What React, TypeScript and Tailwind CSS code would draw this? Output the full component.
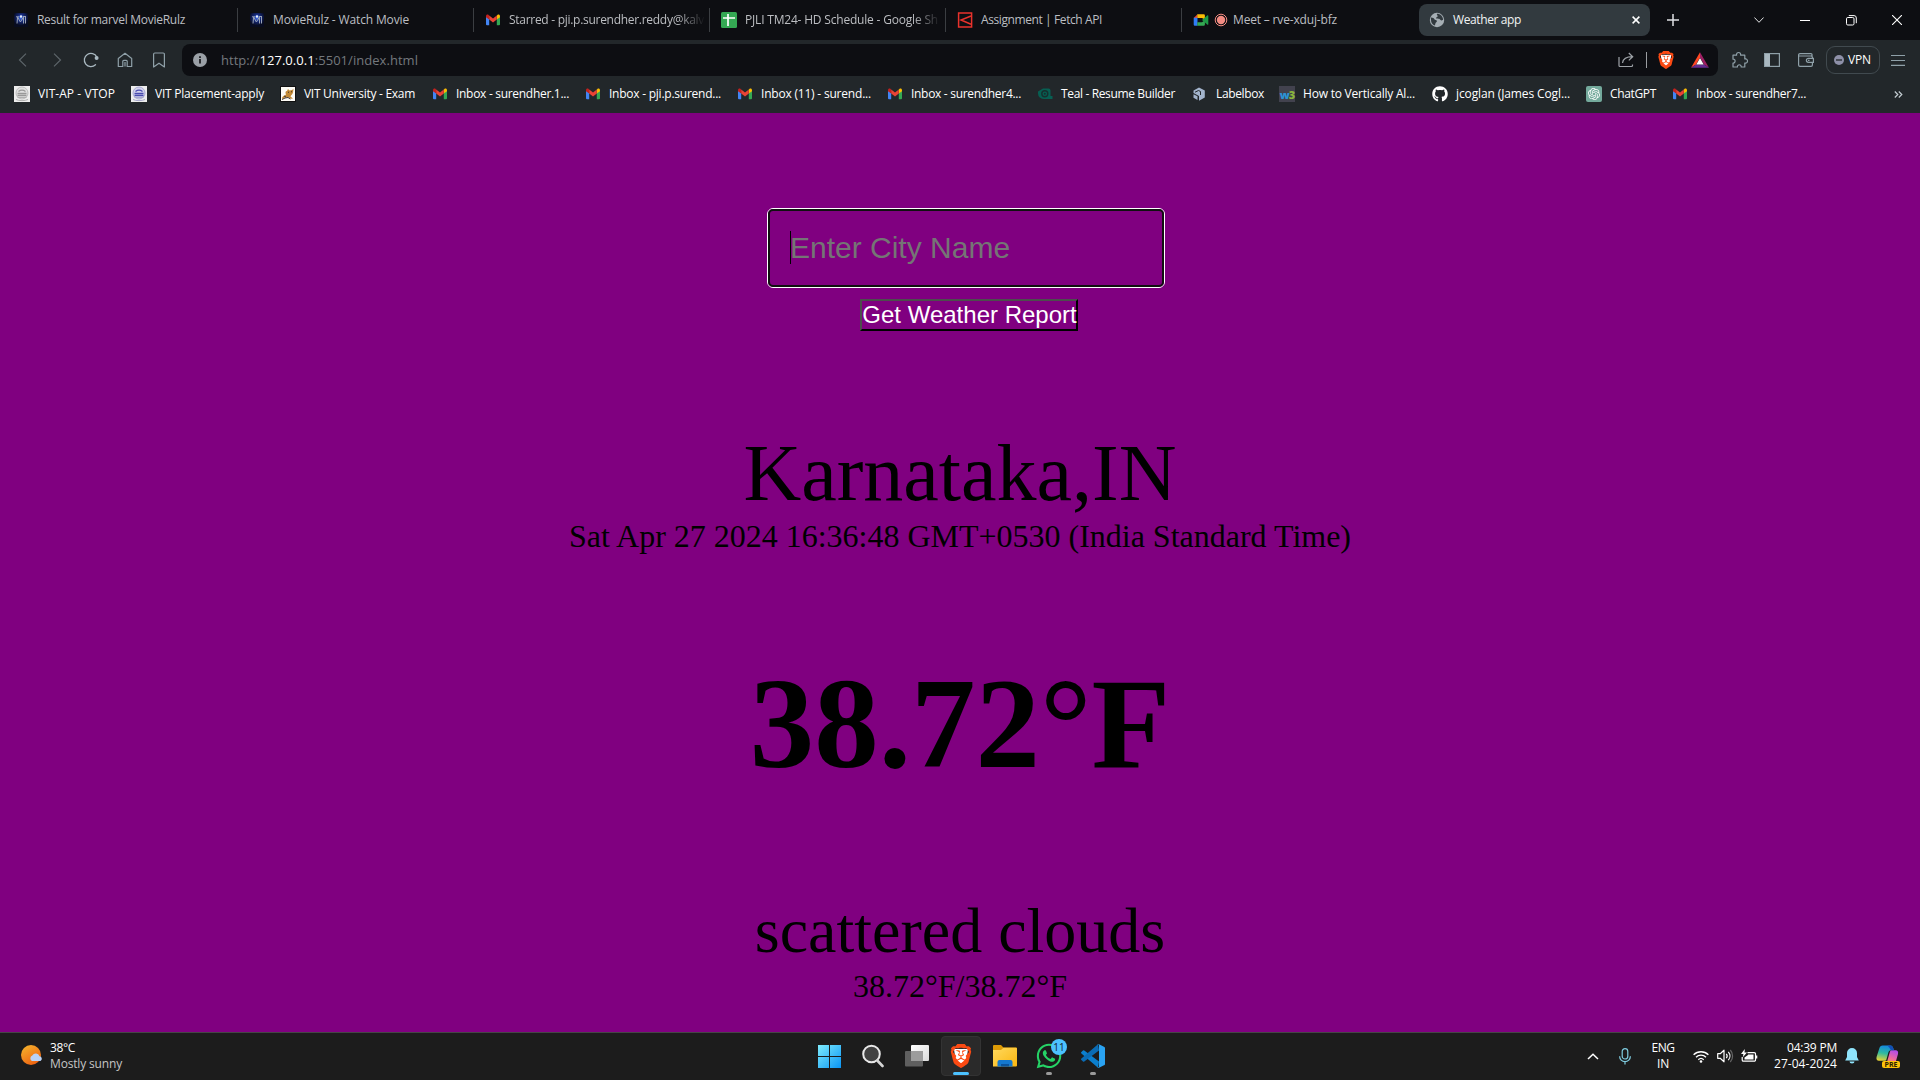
import React, { useLayoutEffect, useRef } from 'react';
import { FaGithub, FaWhatsapp } from 'react-icons/fa';
import { SiBrave, SiOpenai } from 'react-icons/si';

/* Single-line label whose tracking is adjusted so the text spans `w` pixels. */
function Fit({ w, className = '', children }: { w: number; className?: string; children: React.ReactNode }) {
  const ref = useRef<HTMLSpanElement>(null);
  useLayoutEffect(() => {
    const el = ref.current;
    if (!el) return;
    const fit = () => {
      el.style.letterSpacing = '0px';
      const n = (el.textContent || '').length || 1;
      el.style.letterSpacing = `${(w - el.getBoundingClientRect().width) / n}px`;
    };
    fit();
    document.fonts?.ready.then(fit);
  }, [w]);
  return (
    <span ref={ref} className={`inline-block shrink-0 whitespace-pre ${className}`}>
      {children}
    </span>
  );
}

const Gmail = () => (
  <svg width="16" height="16" viewBox="0 0 16 16" className="shrink-0">
    <path d="M1 4.5V12.2a1 1 0 0 0 1 1h2.2V7z" fill="#4285f4" />
    <path d="M15 4.5V12.2a1 1 0 0 1-1 1h-2.2V7z" fill="#34a853" />
    <path d="M11.8 3.7V7.6L15 5.2V4.2c0-1.5-1.6-2-2.6-1.2z" fill="#fbbc04" />
    <path d="M4.2 3.7V7.6L1 5.2V4.2c0-1.5 1.6-2 2.6-1.2z" fill="#c5221f" />
    <path d="M4.2 3.6 8 6.5l3.8-2.9v4L8 10.5 4.2 7.6z" fill="#ea4335" />
  </svg>
);

const MovieIcon = () => (
  <svg width="16" height="16" viewBox="0 0 16 16" className="shrink-0">
    <defs>
      <radialGradient id="mv" cx=".5" cy=".35" r=".55">
        <stop offset="0" stopColor="#3f6ff0" />
        <stop offset=".5" stopColor="#132672" />
        <stop offset="1" stopColor="#080c20" />
      </radialGradient>
    </defs>
    <rect x="1" y="1" width="14" height="14" fill="url(#mv)" />
    <path d="M4 11.5 4.6 5l2.8 5L10.5 5v6.5M12.5 5v6.5M3 4.8h3M10 4.5h3" stroke="#98a2b6" strokeWidth="1" fill="none" />
    <circle cx="8" cy="4.5" r="1.2" fill="#e6efff" />
  </svg>
);

const SheetsIcon = () => (
  <svg width="16" height="16" viewBox="0 0 16 16" className="shrink-0">
    <rect width="16" height="16" rx="1.5" fill="#34a853" />
    <path d="M2 6h12M7 2v12" stroke="#fff" strokeWidth="1.7" />
  </svg>
);

const KalviIcon = () => (
  <svg width="16" height="16" viewBox="0 0 16 16" className="shrink-0">
    <rect x="1.6" y="1" width="13" height="14" fill="none" stroke="#e8322c" strokeWidth="1.5" />
    <path d="M14 4 4 8l10 4.2" fill="none" stroke="#e8322c" strokeWidth="1.5" />
  </svg>
);

const MeetIcon = () => (
  <svg width="16" height="16" viewBox="0 0 16 16" className="shrink-0">
    <path d="M.7 6 4.5 2.2V6z" fill="#ea4335" />
    <path d="M4.3 2.2h6.4a1.2 1.2 0 0 1 1.2 1.2V7.5L9 6H4.3z" fill="#fbbc04" />
    <path d="M.7 5.8h3.8v8H1.9a1.2 1.2 0 0 1-1.2-1.2z" fill="#2f7df6" />
    <path d="M4.3 10.2H9l2.9-2v4.4a1.2 1.2 0 0 1-1.2 1.2H4.3z" fill="#34a853" />
    <path d="m9 8 5.2-4.5c.5-.4 1.1-.2 1.1.5v8.2c0 .6-.6.8-1.1.4z" fill="#1e9a46" />
  </svg>
);

const Globe = () => (
  <svg width="16" height="16" viewBox="0 0 16 16" className="shrink-0">
    <circle cx="8" cy="8" r="7.2" fill="#a5aeb4" />
    <path d="M2 5.5c2 .2 3 .6 3.4 1.7.3.9 2.3.5 2.5 1.7.1 1-1.3 1.2-1.5 2.5l-.5 2.2C3.600 13 2 10.600 2 8zM8 1.800c-.8 1.400 1.200 1.500.6 2.600-.5.8-1.600.5-1.500 1.500.2 1 2 .4 3.100.8 1 .5 1.200 1.800 2.500 1.800l1.400-.8C14 4.500 11.500 1.800 8 1.800z" fill="#323a3f" />
  </svg>
);

const Seal = ({ blue = false }: { blue?: boolean }) => (
  <svg width="16" height="16" viewBox="0 0 16 16" className="shrink-0">
    <rect width="16" height="16" fill="#ededed" />
    <circle cx="8" cy="7" r="6" fill={blue ? '#d4d4ee' : '#e0e0e0'} stroke={blue ? '#a9aad6' : '#bdbdbd'} />
    <path d="M3.500 7.500h9M4.500 5.500c2-1.500 5-1.500 7 0M3.500 9.500h9" stroke={blue ? '#4a4cb0' : '#999'} strokeWidth="1.300" fill="none" />
    <path d="M2 13.500c3 1.500 9 1.500 12 0M3.500 11.500h9" stroke={blue ? '#a7a8cc' : '#b0b0b0'} fill="none" />
  </svg>
);

const TigerIcon = () => (
  <svg width="16" height="16" viewBox="0 0 16 16" className="shrink-0">
    <rect x=".5" y=".5" width="15" height="15" fill="#fdfbf5" stroke="#111" />
    <path d="M2 13c0-3 2-3 4-4.500C5 6.500 5.500 5 7 5l1-2 1.500 1.500L12 4l1.500-1-.5 3.500c-.5 2-2 2.500-2.500 4l2.500 2-2 .3L8 11l-3 .5z" fill="#c48a35" />
    <path d="M2 13.500 5 12l3-.5 2.500 1.500M8 6l1 .5M11 6l1-.5M4 10l2 1" stroke="#43352a" fill="none" />
  </svg>
);

const TealIcon = () => (
  <svg width="16" height="16" viewBox="0 0 16 16" className="shrink-0">
    <path d="M1 5.500 6 2.500h5.500a2 2 0 0 1 2 2v5.500h2v3H7a5.500 5.500 0 0 1-6-5.500z" fill="#075f52" />
    <circle cx="7.800" cy="7.800" r="3" fill="none" stroke="#16302f" strokeWidth="1.400" />
    <circle cx="7.800" cy="7.800" r="1" fill="#16302f" />
  </svg>
);

const LabelboxIcon = () => (
  <svg width="16" height="16" viewBox="0 0 16 16" className="shrink-0">
    <path d="M7 1.500 12.800 4.500v7L7 14.700V10L1.500 7V4.400z" fill="#a3b4cc" />
    <path d="M1.500 8.200 5.500 10.300V14L1.500 11.700z" fill="#a3b4cc" />
    <path d="M3 6.200 6.500 4.500 8.500 5.500V9" stroke="#22272a" strokeWidth="1" fill="none" />
  </svg>
);

const W3Icon = () => (
  <span className="flex h-4 w-4 shrink-0 items-center justify-center bg-[#42424e] text-[11px] leading-none font-extrabold tracking-[-1px]">
    <span className="text-[#2a93d5]">w</span>
    <span className="text-[#8bb63c]">3</span>
  </span>
);

const GptIcon = () => (
  <span className="flex h-4 w-4 shrink-0 items-center justify-center rounded-[2px] bg-[#74aa9c] text-white">
    <SiOpenai size={12} />
  </span>
);

const BraveIcon = ({ size }: { size: number }) => (
  <svg width={size} height={size} viewBox="0 0 24 24" className="shrink-0 overflow-visible">
    <path d="M5 5h14l-1.500 11L12 21l-5.500-5z" fill="#fff" />
    <SiBrave size={24} color="#fb4a13" />
  </svg>
);

const BatIcon = () => (
  <svg width="18" height="16" viewBox="0 0 18 16" className="shrink-0">
    <path d="M9 .3 0 15.700 5 12.500 9 5.500z" fill="#ff4724" />
    <path d="M9 .3V5.500l4 7 5 3.200z" fill="#9e1f63" />
    <path d="M0 15.700h18l-5-3.200H5z" fill="#662d91" />
    <path d="m9 6 3.700 6.500H5.300z" fill="#fff" />
  </svg>
);

function Tab({ icon, children, w, fade = false }: { icon: React.ReactNode; children: string; w: number; fade?: boolean }) {
  return (
    <div className="flex h-10 w-[236px] shrink-0 items-center pl-[11px]">
      {icon}
      <div
        className={
          fade
            ? 'ml-2 w-[196px] [mask-image:linear-gradient(to_right,black_168px,transparent_196px)]'
            : 'ml-2 flex-1'
        }
      >
        <Fit w={w} className="text-[#bcbec2]">{children}</Fit>
      </div>
      <div className="ml-auto h-6 w-px bg-[#3b3e42]" />
    </div>
  );
}

const bookmarks: { icon: React.ReactNode; label: string; slot: string; w: number }[] = [
  { icon: <Seal />, label: 'VIT-AP - VTOP', slot: 'w-[117px]', w: 77 },
  { icon: <Seal blue />, label: 'VIT Placement-apply', slot: 'w-[149px]', w: 109 },
  { icon: <TigerIcon />, label: 'VIT University - Exam', slot: 'w-[152px]', w: 111 },
  { icon: <Gmail />, label: 'Inbox - surendher.1...', slot: 'w-[153px]', w: 113 },
  { icon: <Gmail />, label: 'Inbox - pji.p.surend...', slot: 'w-[152px]', w: 112 },
  { icon: <Gmail />, label: 'Inbox (11) - surend...', slot: 'w-[150px]', w: 110 },
  { icon: <Gmail />, label: 'Inbox - surendher4...', slot: 'w-[150px]', w: 110 },
  { icon: <TealIcon />, label: 'Teal - Resume Builder', slot: 'w-[155px]', w: 114 },
  { icon: <LabelboxIcon />, label: 'Labelbox', slot: 'w-[87px]', w: 48 },
  { icon: <W3Icon />, label: 'How to Vertically Al...', slot: 'w-[153px]', w: 112 },
  { icon: <FaGithub size={16} color="#fff" className="shrink-0" />, label: 'jcoglan (James Cogl...', slot: 'w-[154px]', w: 114 },
  { icon: <GptIcon />, label: 'ChatGPT', slot: 'w-[86px]', w: 46 },
  { icon: <Gmail />, label: 'Inbox - surendher7...', slot: 'w-[150px]', w: 110 },
];

function TabStrip() {
  return (
    <div className="flex h-10 items-center bg-[#0d0e12] pl-[2px]">
      <Tab icon={<MovieIcon />} w={148}>Result for marvel MovieRulz</Tab>
      <Tab icon={<MovieIcon />} w={136}>MovieRulz - Watch Movie</Tab>
      <Tab icon={<Gmail />} w={195} fade>Starred - pji.p.surendher.reddy@kalv</Tab>
      <Tab icon={<SheetsIcon />} w={193} fade>PJLI TM24- HD Schedule - Google Sh</Tab>
      <Tab icon={<KalviIcon />} w={121}>Assignment | Fetch API</Tab>
      <div className="flex h-10 w-[237px] shrink-0 items-center pl-[11px]">
        <MeetIcon />
        <svg width="14" height="14" viewBox="0 0 14 14" className="ml-[5px] shrink-0">
          <circle cx="7" cy="7" r="5.800" fill="none" stroke="#f28b82" strokeWidth="1" />
          <circle cx="7" cy="7" r="4.200" fill="#f28b82" />
        </svg>
        <Fit w={104} className="ml-[5px] text-[#bcbec2]">Meet – rve-xduj-bfz</Fit>
      </div>
      <div className="flex h-8 w-[231px] shrink-0 items-center rounded-lg bg-[#323a3f] pr-[10px] pl-[10px]">
        <Globe />
        <Fit w={68} className="ml-2 text-[#f1f3f4]">Weather app</Fit>
        <svg width="8" height="8" viewBox="0 0 8 8" className="ml-auto">
          <path d="m.6.6 6.800 6.800M7.400.6.6 7.400" stroke="#fff" strokeWidth="1.500" />
        </svg>
      </div>
      <svg width="12" height="12" viewBox="0 0 12 12" className="ml-[17px]">
        <path d="M6 0v12M0 6h12" stroke="#dfe1e5" strokeWidth="1.500" />
      </svg>
      <svg width="10" height="6" viewBox="0 0 10 6" className="ml-[75px]">
        <path d="m.4.5 4.600 4.800L9.600.5" stroke="#e4e5e7" fill="none" />
      </svg>
      <div className="mt-px ml-[36px] h-px w-[10px] bg-white" />
      <svg width="11" height="11" viewBox="0 0 11 11" className="ml-[36px]">
        <rect x=".5" y="2.500" width="7.500" height="7.500" rx="1.300" fill="none" stroke="#fff" />
        <path d="M2.800.6H8A2.300 2.300 0 0 1 10.300 3v5.200" fill="none" stroke="#fff" />
      </svg>
      <svg width="10" height="10" viewBox="0 0 10 10" className="ml-[35px]">
        <path d="m0 0 10 10M10 0 0 10" stroke="#fff" strokeWidth="1.100" />
      </svg>
    </div>
  );
}

function Toolbar() {
  return (
    <div className="flex h-10 items-center pl-[18px]">
      <svg width="9" height="14" viewBox="0 0 9 14" className="shrink-0">
        <path d="M8 .6 1.500 7 8 13.400" stroke="#5d656a" strokeWidth="1.200" fill="none" />
      </svg>
      <svg width="9" height="14" viewBox="0 0 9 14" className="ml-[26px] shrink-0">
        <path d="M1 .6 7.500 7 1 13.400" stroke="#5d656a" strokeWidth="1.200" fill="none" />
      </svg>
      <svg width="16" height="16" viewBox="0 0 16 16" className="ml-[21px] shrink-0">
        <path d="M13.800 5A6.600 6.600 0 1 0 12.500 12.800" stroke="#a9b8c0" strokeWidth="1.300" fill="none" strokeLinecap="round" />
        <circle cx="13.600" cy="6" r="2" fill="#a9b8c0" />
      </svg>
      <svg width="16" height="16" viewBox="0 0 16 16" className="ml-[18px] shrink-0">
        <path d="M1.300 6.500V14.500H5.800V9.300a1 1 0 0 1 1-1h2.400a1 1 0 0 1 1 1v5.200h4.500V6.500L8 1.300zM8 10v4.500" stroke="#8fa0a8" strokeWidth="1.200" fill="none" strokeLinejoin="round" />
      </svg>
      <svg width="14" height="16" viewBox="0 0 14 16" className="ml-[19px] shrink-0">
        <path d="M1.600 2.200a1.200 1.200 0 0 1 1.200-1.200h8.400a1.200 1.200 0 0 1 1.200 1.200V15L7 11.200 1.600 15z" stroke="#8fa0a8" strokeWidth="1.200" fill="none" strokeLinejoin="round" />
      </svg>
      <div className="ml-[16px] flex h-8 w-[1536px] shrink-0 items-center rounded-lg bg-[#0d0e12] pl-[11px]">
        <svg width="14" height="14" viewBox="0 0 14 14">
          <circle cx="7" cy="7" r="7" fill="#9aa0a6" />
          <path d="M7 6v4.500M7 3.200v1.700" stroke="#0d0e12" strokeWidth="1.600" />
        </svg>
        <Fit w={197} className="ml-[14px] text-[13px] text-[#74787d]">
          http://<span className="text-white">127.0.0.1</span>:5501/index.html
        </Fit>
        <svg width="16" height="16" viewBox="0 0 16 16" className="ml-auto">
          <path d="M1 5v8.500a1 1 0 0 0 1 1h11.500a1 1 0 0 0 1-1v-1M4.500 11C5 7 8 4.700 14.500 4.700M10.800 1l3.900 3.700-3.900 3.700" stroke="#9ea3a8" strokeWidth="1.200" fill="none" />
        </svg>
        <div className="ml-[12px] h-4 w-px bg-[#9a9da1]" />
        <div className="ml-[10px] flex w-[18px]"><BraveIcon size={18} /></div>
        <div className="mr-[9px] ml-[16px]"><BatIcon /></div>
      </div>
      <svg width="18" height="18" viewBox="0 0 18 18" className="ml-[13px] shrink-0">
        <path d="M2 4.200h3.600c-.8-3.600 4.800-3.600 4 0H13.800V8c3.600-.8 3.600 4.800 0 4v4h-3.600c.4-3-4.200-3-3.800 0H2v-4c2.800.4 2.800-4.200 0-3.800z" stroke="#8fa0a8" strokeWidth="1.200" fill="none" strokeLinejoin="round" />
      </svg>
      <svg width="16" height="14" viewBox="0 0 16 14" className="ml-[15px] shrink-0">
        <rect x=".6" y=".6" width="14.800" height="12.800" fill="none" stroke="#8fa0a8" strokeWidth="1.200" />
        <path d="M1 1h5v12H1z" fill="#a9b8c0" />
      </svg>
      <svg width="16" height="14" viewBox="0 0 16 14" className="ml-[18px] shrink-0">
        <path d="M14 4V1.600a1 1 0 0 0-1-1H2a1.400 1.400 0 0 0-1.400 1.400v10A1.400 1.400 0 0 0 2 13.400h11a1.400 1.400 0 0 0 1.400-1.400v-2M.6 3h12.800a1 1 0 0 1 1 1v1.300h-4a1.900 1.900 0 0 0 0 4h5V5.300h-1.200M10 7.300h1.500" stroke="#8fa0a8" strokeWidth="1.200" fill="none" />
      </svg>
      <div className="ml-[12px] flex h-7 w-[54px] shrink-0 items-center rounded-[9px] border border-[#414a4f] pl-[7px]">
        <svg width="10" height="10" viewBox="0 0 10 10">
          <circle cx="5" cy="5" r="5" fill="#8e90a8" />
          <path d="M2 5h6" stroke="#22272a" strokeWidth="1.300" />
        </svg>
        <Fit w={23} className="ml-[4px] text-white">VPN</Fit>
      </div>
      <svg width="14" height="12" viewBox="0 0 14 12" className="ml-[11px] shrink-0">
        <path d="M0 1.500h14M0 6.500h14M0 11.400h14" stroke="#8fa0a8" strokeWidth="1.200" />
      </svg>
    </div>
  );
}

function BookmarkBar() {
  return (
    <div className="flex h-[33px] items-center pb-[5px] pl-[14px]">
      {bookmarks.map((b) => (
        <div key={b.label} className={`flex shrink-0 items-center ${b.slot}`}>
          {b.icon}
          <Fit w={b.w} className="ml-2 text-white">{b.label}</Fit>
        </div>
      ))}
      <svg width="9" height="7" viewBox="0 0 9 7" className="mr-[17px] ml-auto">
        <path d="m.8.5 3 3-3 3M4.800.5l3 3-3 3" stroke="#c3ccd1" strokeWidth="1.200" fill="none" />
      </svg>
    </div>
  );
}

function WeatherPage() {
  return (
    <main className="flex h-[919px] flex-col items-center bg-[#800080] text-black">
      <div className="mt-[95px] ml-[12px] flex h-[80px] w-[398px] items-center rounded-[6px] border border-white">
        <div className="flex h-[78px] w-[396px] items-center rounded-[5px] border-2 border-[#101010] pb-px pl-[20px]">
          <div className="h-[33px] w-px bg-black" />
          <span className="-ml-px font-['Liberation_Sans',Arial,sans-serif] text-[30px] leading-[34px] text-[#757575]">Enter City Name</span>
        </div>
      </div>
      <button className="mt-[11px] ml-[18px] flex h-8 w-[218px] items-center justify-center border-2 border-t-[#4d4d4d] border-r-black border-b-black border-l-[#4d4d4d] pl-px font-['Liberation_Sans',Arial,sans-serif] text-[24px] leading-7 whitespace-nowrap text-white">
        Get Weather Report
      </button>
      <div className="flex flex-col items-center font-['Liberation_Serif','Times_New_Roman',serif] whitespace-nowrap">
        <div className="mt-[98px] text-[80px] leading-[88px]">Karnataka,IN</div>
        <div className="mt-px text-[32px] leading-9">
          <Fit w={782}>Sat Apr 27 2024 16:36:48 GMT+0530 (India Standard Time)</Fit>
        </div>
        <div className="mt-[99px] text-[129px] leading-[142px] font-bold">38.72°F</div>
        <div className="mt-[100px] text-[64px] leading-[71px]">scattered clouds</div>
        <div className="mt-[2px] text-[32px] leading-9">38.72°F/38.72°F</div>
      </div>
    </main>
  );
}

function Taskbar() {
  return (
    <footer className="grid h-12 grid-cols-[807px_308px_1fr] border-t border-[#454545] bg-[#1c1c1c] pb-px text-white">
      <div className="flex items-center pl-[20px]">
        <svg width="24" height="24" viewBox="0 0 24 24" className="mb-[2px]">
          <defs>
            <linearGradient id="sun" x1="0" y1="0" x2=".6" y2="1">
              <stop stopColor="#f5b82e" />
              <stop offset="1" stopColor="#ee6412" />
            </linearGradient>
          </defs>
          <circle cx="11" cy="12" r="10" fill="url(#sun)" />
          <path d="M12 18a3 3 0 0 1 .3-5.500 4 4 0 0 1 7.200.8A2.500 2.500 0 0 1 20.500 18z" fill="#b9d3f7" />
        </svg>
        <div className="ml-[6px] flex flex-col items-start leading-4">
          <Fit w={25}>38°C</Fit>
          <Fit w={72} className="text-[#c5c5c5]">Mostly sunny</Fit>
        </div>
      </div>
      <div className="flex items-center">
        {/* Start */}
        <div className="flex w-11 justify-center">
          <svg width="23" height="23" viewBox="0 0 23 23">
            <defs>
              <linearGradient id="win" x1="0" y1="0" x2="23" y2="23" gradientUnits="userSpaceOnUse">
                <stop stopColor="#7eecfd" />
                <stop offset="1" stopColor="#0a95f5" />
              </linearGradient>
            </defs>
            <path d="M0 0h11v11H0zM12 0h11v11H12zM0 12h11v11H0zM12 12h11v11H12z" fill="url(#win)" />
          </svg>
        </div>
        {/* Search */}
        <div className="flex w-11 justify-center">
          <svg width="22" height="24" viewBox="0 0 22 24">
            <circle cx="9.500" cy="10" r="8.300" fill="#414141" stroke="#e8e8e8" strokeWidth="2" />
            <path d="m15.300 16.500 5.200 5.500" stroke="#d6d6d6" strokeWidth="2.600" strokeLinecap="round" />
          </svg>
        </div>
        {/* Task view */}
        <div className="flex w-11 justify-center">
          <svg width="24" height="22" viewBox="0 0 24 22">
            <defs>
              <linearGradient id="tv" x1="0" y1="0" x2="1" y2="1">
                <stop stopColor="#fff" />
                <stop offset="1" stopColor="#dadada" />
              </linearGradient>
            </defs>
            <rect x="6" width="18" height="16" rx="1" fill="url(#tv)" />
            <rect y="6" width="18" height="15.500" rx="1" fill="#5f5f5f" />
            <path d="M6 6h12v10H6z" fill="#9c9c9c" />
          </svg>
        </div>
        {/* Brave */}
        <div className="flex w-11 justify-center">
          <div className="relative flex h-10 w-10 items-center justify-center rounded-[4px] border border-[#333] bg-[#2a2a2a]">
            <BraveIcon size={24} />
            <div className="absolute bottom-0 left-[11px] h-[3px] w-4 rounded-full bg-[#4cc2ff]" />
          </div>
        </div>
        {/* Explorer */}
        <div className="flex w-11 justify-center">
          <svg width="24" height="22" viewBox="0 0 24 22">
            <defs>
              <linearGradient id="fold" x1="0" y1="0" x2="1" y2="1">
                <stop stopColor="#ffd95e" />
                <stop offset="1" stopColor="#fbb60f" />
              </linearGradient>
            </defs>
            <path d="M0 1a1 1 0 0 1 1-1h7l2.500 2.500H23a1 1 0 0 1 1 1V8H0z" fill="#dd9a06" />
            <path d="M0 5h8l2.500-2.200H23a1 1 0 0 1 1 1V20.500a1 1 0 0 1-1 1H0z" fill="url(#fold)" />
            <path d="M4.500 21.500V17a2 2 0 0 1 2-2h11a2 2 0 0 1 2 2v4.500z" fill="#1478cf" />
            <path d="M8 19h8v2.500H8z" fill="#0b539b" />
          </svg>
        </div>
        {/* WhatsApp */}
        <div className="flex w-11 justify-center">
          <div className="relative flex h-10 w-10 items-center justify-center">
            <FaWhatsapp size={28} color="#25d366" />
            <div className="absolute top-[3px] right-[2px] flex h-4 w-4 items-center justify-center rounded-full bg-[#4cc2ff] text-[10px] leading-none text-[#10222d]">11</div>
            <div className="absolute bottom-px left-[17px] h-[3px] w-[6px] rounded-full bg-[#9a9a9a]" />
          </div>
        </div>
        {/* VS Code */}
        <div className="flex w-11 justify-center">
          <div className="relative flex h-10 w-10 items-center justify-center">
            <svg width="24" height="24" viewBox="0 0 24 24">
              <path d="m18 17.500-14.700-11a1 1 0 0 0-1.300 0L.4 7.900a1 1 0 0 0 0 1.500L17 23.800z" fill="#0b7fce" />
              <path d="M18 6.500 3.300 17.500a1 1 0 0 1-1.300 0L.4 16.100a1 1 0 0 1 0-1.500L17 .2z" fill="#0a6cb5" />
              <path d="M17.500.1 23 2.700a1.500 1.500 0 0 1 1 1.400v15.800a1.500 1.500 0 0 1-1 1.400l-5.500 2.600c-.8.300-.9.100-1.500-.4.700.6 2 .2 2-.9V1.400c0-1-1.300-1.500-2-.9.600-.5.800-.6 1.500-.4z" fill="#2aa3f2" />
            </svg>
            <div className="absolute bottom-px left-[17px] h-[3px] w-[6px] rounded-full bg-[#9a9a9a]" />
          </div>
        </div>
      </div>
      <div className="flex items-center justify-end pr-[20px]">
        <svg width="12" height="7" viewBox="0 0 12 7">
          <path d="m1 6 5-4.800L11 6" stroke="#fff" strokeWidth="1.500" fill="none" />
        </svg>
        <svg width="12" height="17" viewBox="0 0 12 17" className="ml-[20px]">
          <rect x="3.200" y=".7" width="5.600" height="10.300" rx="2.800" fill="none" stroke="#7fcde0" strokeWidth="1.200" />
          <path d="M.6 8.300a5.400 5.400 0 0 0 10.800 0M6 13.600v3" fill="none" stroke="#7fcde0" strokeWidth="1.200" />
        </svg>
        <div className="ml-[20px] flex w-6 flex-col items-center leading-4">
          <Fit w={23}>ENG</Fit>
          <Fit w={12}>IN</Fit>
        </div>
        <svg width="16" height="13" viewBox="0 0 16 13" className="ml-[18px]">
          <path d="M.6 4.800a10.500 10.500 0 0 1 14.800 0M3 7.300a7 7 0 0 1 10 0M5.300 9.700a3.900 3.900 0 0 1 5.400 0" stroke="#fff" strokeWidth="1.300" fill="none" />
          <circle cx="8" cy="11.500" r="1.300" fill="#fff" />
        </svg>
        <svg width="17" height="14" viewBox="0 0 17 14" className="ml-[8px]">
          <path d="M.7 4.700h2.500L7 1.200v11.600L3.200 9.300H.7z" stroke="#fff" strokeWidth="1.200" fill="none" strokeLinejoin="round" />
          <path d="M9.300 4.800a3.500 3.500 0 0 1 0 4.400M11.300 2.800a6.300 6.300 0 0 1 0 8.400" stroke="#fff" strokeWidth="1.200" fill="none" />
          <path d="M13.300 1a9 9 0 0 1 0 12" stroke="#666" strokeWidth="1.200" fill="none" />
        </svg>
        <svg width="17" height="14" viewBox="0 0 17 14" className="ml-[7px]">
          <path d="M6.500 3.600h6.700a1.300 1.300 0 0 1 1.300 1.300v6a1.300 1.300 0 0 1-1.300 1.300H2.500a1.300 1.300 0 0 1-1.300-1.300V8" stroke="#fff" strokeWidth="1.200" fill="none" />
          <path d="M7 5.500h5.500v5H3.500V8.500L7 6zM15 6.500h1.300v3H15zM3.800 0 0 5h2.400L1.800 8.300 6 3.500H3.500z" fill="#fff" />
        </svg>
        <div className="ml-[16px] flex w-[63px] flex-col items-end leading-4">
          <Fit w={50}>04:39 PM</Fit>
          <Fit w={63}>27-04-2024</Fit>
        </div>
        <svg width="14" height="16" viewBox="0 0 14 16" className="ml-[8px]">
          <path d="M7 0a5 5 0 0 1 5 5v4l1.800 3.500H.2L2 9V5a5 5 0 0 1 5-5zM4.500 13.500h5a2.500 2 0 0 1-5 0z" fill="#8fe4fb" />
        </svg>
        <div className="relative ml-[17px] h-[24px] w-[24px]">
          <svg width="24" height="24" viewBox="0 0 25 24">
            <defs>
              <linearGradient id="cpA" x1=".5" y1="0" x2=".3" y2="1">
                <stop stopColor="#1286e0" />
                <stop offset=".5" stopColor="#2fbaa0" />
                <stop offset="1" stopColor="#e8d334" />
              </linearGradient>
              <linearGradient id="cpB" x1=".7" y1="0" x2=".3" y2="1">
                <stop stopColor="#b04bea" />
                <stop offset=".6" stopColor="#f06a9b" />
                <stop offset="1" stopColor="#f9a152" />
              </linearGradient>
            </defs>
            <path d="M7 1h8c2 0 2.500 1.500 3 3l.6 2h-3c-1.500 0-2.400 1-2.800 2.500L11 15c-.4 1.500-1 2-2.500 2H3c-2 0-3-1.500-2.400-4L3.500 4C4.200 2 5 1 7 1z" fill="url(#cpA)" />
            <path d="M16 6h4.500c2 0 3 1.500 2.400 4l-2 7c-.6 2-1.500 3-3.500 3H9c1.500 0 2.300-1 2.700-2.500l2.500-9C14.600 7 15 6 16 6z" fill="url(#cpB)" />
            <path d="M12 1h3c2 0 2.500 1.500 3 3l.6 2h-3L14 3.500z" fill="#134fb5" />
          </svg>
          <div className="absolute right-0 bottom-0 flex h-[7px] w-[18px] items-center justify-center rounded-[2px] bg-[#fdc20a] text-[7px] leading-none font-bold text-[#2b2100]">PRE</div>
        </div>
      </div>
    </footer>
  );
}

export default function App() {
  return (
    <div className="h-[1080px] w-[1920px] overflow-hidden font-['Open_Sans','Noto_Sans',sans-serif] text-[12px] leading-4">
      <TabStrip />
      <div className="h-[73px] bg-[#22272a]">
        <Toolbar />
        <BookmarkBar />
      </div>
      <WeatherPage />
      <Taskbar />
    </div>
  );
}
